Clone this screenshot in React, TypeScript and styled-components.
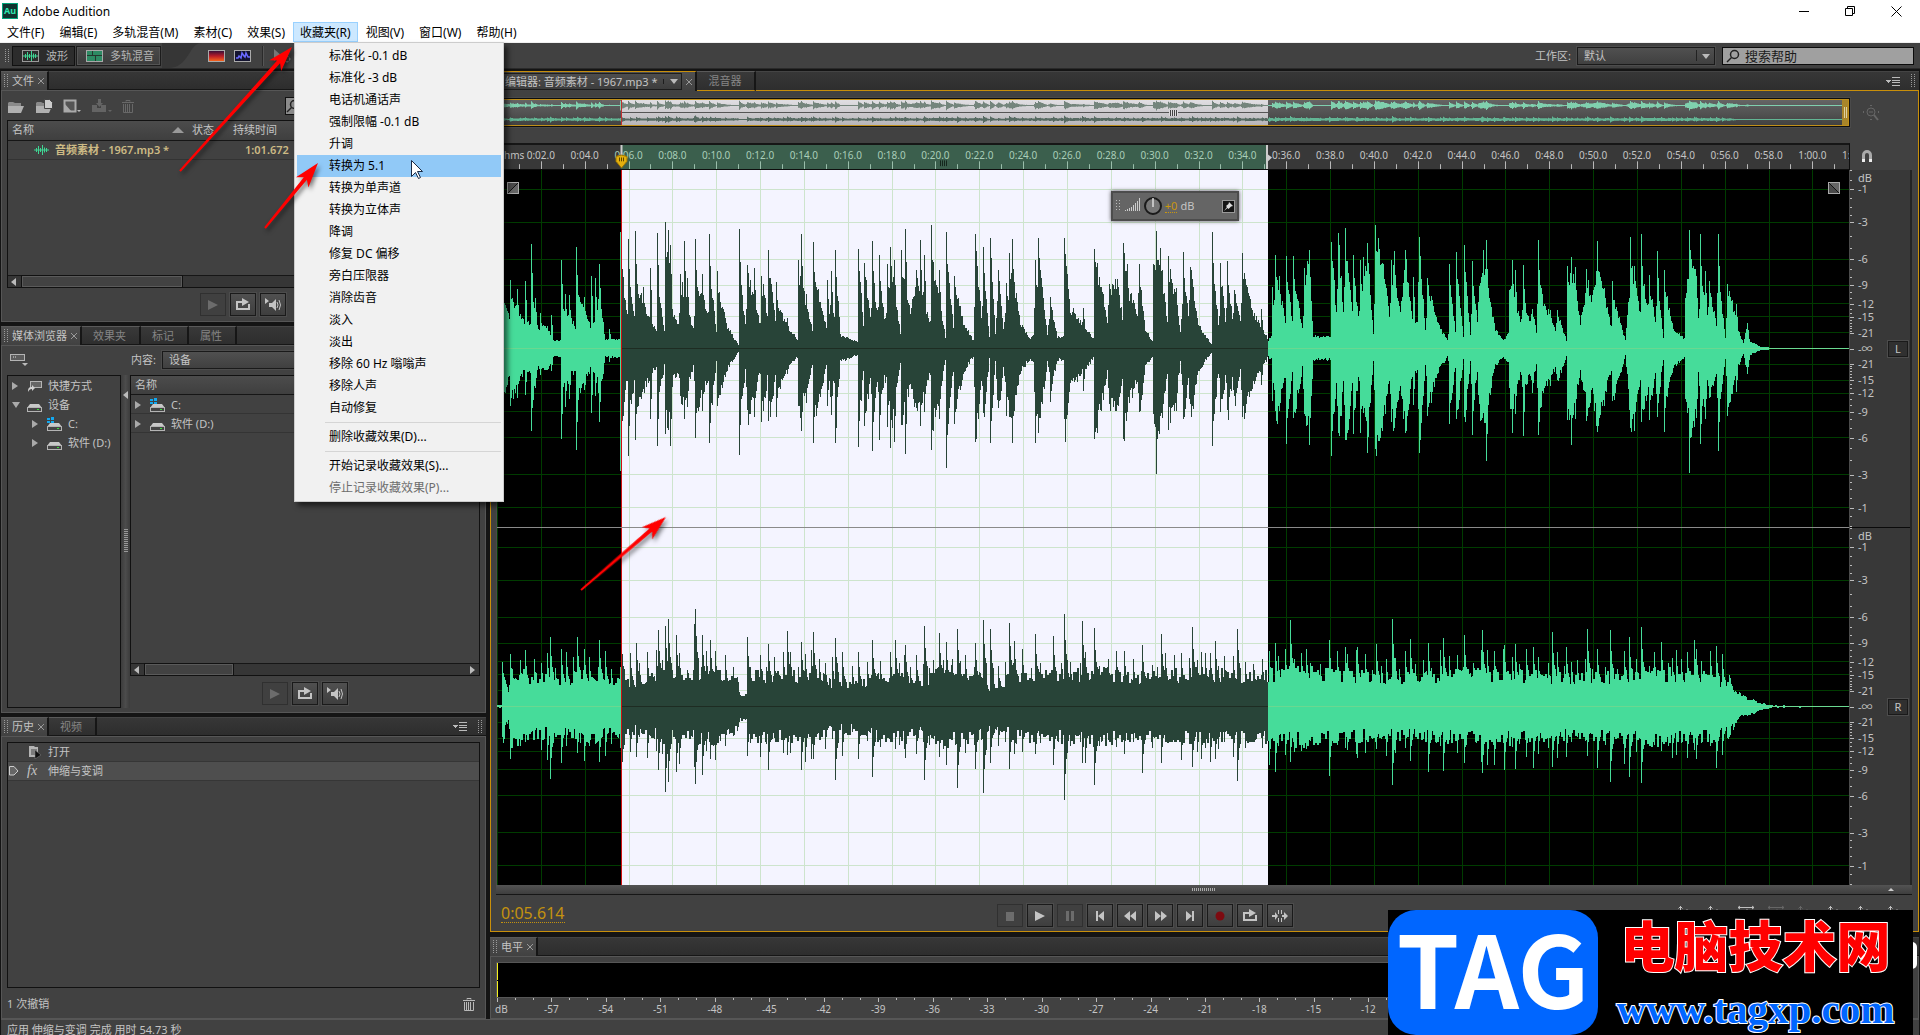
import React from "react";
import styled, { createGlobalStyle, css } from "styled-components";

/* ---------- waveform data ---------- */

type Pt = [number, number];

// Three units per column horizontally, three units per level step vertically.
const decode = (offset: number, zero: number, flat: number[]): Pt[] => {
  const out: Pt[] = [];
  for (let i = 0; i < flat.length; i += 2) {
    out.push([Math.round(offset + flat[i] / 3), (zero - flat[i + 1]) / 3]);
  }
  return out;
};

const leftSpikes: Pt[] = [
  ...decode(-17, 865, [
    91, 660, 112, 685, 135, 662, 154, 550, 166, 712, 180, 758, 214, 765, 244, 598, 256, 700, 268, 705, 289, 560, 313, 710,
    334, 648, 346, 652, 357, 612, 388, 805, 421, 516, 427, 625, 445, 535, 466, 512, 490, 680, 511, 623, 532, 517, 556, 485,
    565, 508, 570, 555, 601, 640, 611, 541, 622, 652, 646, 536, 667, 640, 688, 520, 712, 632, 778, 506, 801, 615, 823, 623,
    844, 646, 865, 569, 889, 664, 922, 772, 955, 600, 964, 520, 979, 700, 1000, 545, 1021, 725, 1042, 658, 1054, 631, 1066,
    568, 1135, 565, 1153, 608, 1177, 541, 1198, 585, 1222, 610, 1231, 560, 1243, 600, 1264, 568, 1276, 505, 1309, 628, 1321,
    538, 1333, 585, 1354, 494, 1378, 628, 1399, 514, 1423, 646,
  ]),
  ...decode(473, 865, [
    16, 520, 40, 560, 61, 534, 85, 634, 107, 667, 118, 577, 127, 535, 196, 600, 205, 532, 241, 709, 283, 534, 308, 742, 338,
    742, 373, 565, 382, 607, 394, 680, 418, 670, 429, 675, 440, 655, 460, 547, 472, 612, 484, 697, 506, 610, 550, 612, 559,
    512, 571, 562, 595, 586, 604, 655, 617, 682, 640, 575, 661, 620, 727, 514, 751, 608, 772, 601, 793, 690, 817, 577, 826,
    655, 838, 708, 872, 747, 905, 684, 916, 585, 928, 648, 949, 587, 970, 588, 1003, 622, 1016, 568, 1084, 544, 1105, 517,
    1126, 502, 1150, 583, 1171, 598, 1180, 591, 1192, 547, 1216, 493, 1225, 532, 1237, 627, 1262, 600, 1271, 571, 1304, 568,
    1328, 651, 1348, 531, 1372, 652, 1383, 706,
  ]),
  ...decode(943, 1045, [
    28, 790, 49, 755, 73, 735, 95, 783, 128, 750, 139, 718, 206, 870, 216, 778, 226, 808, 250, 795, 294, 718, 382, 798, 394,
    770, 404, 800, 437, 805, 470, 722, 481, 830, 493, 862, 516, 843, 571, 709, 583, 798, 604, 701, 626, 825, 650, 753, 671,
    810, 748, 688, 760, 798, 781, 700, 794, 812, 808, 843, 833, 702, 861, 852, 887, 912, 920, 968,
  ]),
];

const leftBase: Pt[] = [
  [0, 40],
  ...decode(-17, 865, [
    75, 740, 90, 790, 93, 710, 130, 785, 150, 790, 156, 700, 175, 805, 200, 800, 220, 840, 243, 840, 245, 740, 285, 800, 290,
    700, 320, 780, 330, 800, 350, 760, 358, 700, 375, 840, 420, 835, 425, 650, 440, 770, 450, 680, 465, 780, 470, 680, 505,
    770, 530, 815, 535, 700, 555, 825, 560, 600, 580, 770, 595, 790, 605, 680, 640, 810, 650, 670, 670, 730, 685, 760, 690,
    640, 708, 820, 715, 700, 740, 800, 775, 855, 780, 660, 795, 790, 805, 650, 840, 790, 848, 680, 862, 770, 869, 660, 885,
    780, 895, 735, 920, 800, 953, 840, 957, 650, 995, 810, 1003, 650, 1040, 820, 1050, 720, 1062, 760, 1068, 640, 1080, 825,
    1130, 845, 1135, 600, 1150, 790, 1155, 660, 1170, 770, 1180, 660, 1190, 760, 1200, 670, 1212, 780, 1225, 740, 1232, 620,
    1262, 840, 1266, 640, 1290, 760, 1310, 650, 1350, 790, 1356, 620, 1370, 680, 1395, 830, 1402, 620, 1420, 800, 1426, 670,
    1450, 790, 1480, 840, 1486, 640,
  ]),
  ...decode(473, 865, [
    16, 560, 32, 770, 42, 660, 58, 830, 64, 620, 75, 820, 85, 650, 100, 810, 110, 720, 125, 640, 150, 790, 180, 835, 190, 820,
    193, 740, 206, 620, 230, 820, 242, 740, 260, 830, 280, 830, 286, 600, 300, 760, 320, 770, 350, 810, 370, 835, 375, 630,
    395, 700, 410, 790, 418, 690, 430, 680, 442, 670, 455, 770, 462, 600, 475, 700, 500, 760, 507, 650, 525, 810, 546, 840,
    552, 620, 560, 600, 575, 650, 590, 790, 600, 650, 615, 700, 630, 820, 641, 650, 655, 770, 663, 630, 680, 780, 700, 820,
    725, 855, 729, 620, 745, 790, 755, 680, 765, 780, 773, 660, 785, 770, 795, 700, 810, 790, 820, 650, 850, 760, 880, 810,
    893, 840, 903, 830, 905, 690, 910, 750, 917, 640, 945, 780, 950, 660, 965, 790, 972, 660, 995, 800, 1005, 660, 1016, 600,
    1030, 830, 1080, 830, 1084, 560, 1098, 760, 1107, 580, 1118, 760, 1127, 570, 1145, 760, 1152, 650, 1165, 770, 1182, 650,
    1195, 620, 1208, 825, 1218, 560, 1240, 630, 1256, 770, 1270, 620, 1290, 760, 1305, 600, 1325, 780, 1340, 790, 1348, 560,
    1365, 810, 1373, 690, 1400, 790, 1432, 840,
  ]),
  ...decode(943, 145, [
    0, 100, 24, 100, 28, -60, 45, 90, 50, -60, 68, 110, 74, -80, 90, 105, 96, -40, 110, 60, 118, -60, 127, -60, 140, -110, 147,
    0, 165, 90, 190, 120, 203, 100, 206, 0, 214, -60, 240, 70, 252, 0, 268, 70, 275, 20, 288, 100, 295, -90, 310, 20, 330, 40,
    345, 90, 350, 40, 378, 120, 382, -60, 400, -60, 420, 70, 428, 20, 440, -50, 455, 0, 471, -90, 500, 30, 512, 80, 517, -20,
    555, 120, 560, 50, 572, -100, 600, 40, 606, -60, 625, 20, 630, -20, 645, 60, 652, -40, 668, 110, 673, -40, 700, 90, 733,
    115, 736, 0, 749, -120, 767, -60, 775, 60, 783, -80, 800, 40, 808, -20, 828, 70, 834, -80, 855, 115, 860, -30, 875, 10,
    890, 80, 910, 130, 918, 80, 930, 125, 960, 139, 985, 142, 1000, 144,
  ]),
  [1351, 0.4],
];

const noise = (n: number) => {
  const s = Math.sin(n * 127.1 + 11.7) * 43758.5453;
  return s - Math.floor(s);
};

const PLOT = 1352;
const SEL_A = 124;
const SEL_B = 771;

const interpolate = (pts: Pt[], x: number) => {
  for (let i = 1; i < pts.length; i++) {
    if (x <= pts[i][0]) {
      const [ax, ay] = pts[i - 1];
      const [bx, by] = pts[i];
      return bx === ax ? by : ay + ((by - ay) * (x - ax)) / (bx - ax);
    }
  }
  return pts[pts.length - 1][1];
};

type Shape = { seed: number; rough: number; gain: number; mirror?: boolean; grain?: number; decay?: number };

const build = (base: Pt[], spikes: Pt[], { seed, rough, gain, mirror, grain = 1, decay = 0 }: Shape) => {
  const out: number[] = [];
  for (let x = 0; x < PLOT; x++) {
    const b = interpolate(base, x);
    out.push(Math.max(0.5, b * gain * (1 - rough / 2 + rough * noise(Math.floor(x / grain) + seed))));
  }
  spikes.forEach(([x, h], i) => {
    if (x < 0 || x >= PLOT) return;
    const peak = h * (mirror ? 0.62 + 0.45 * noise(i + seed) : 1);
    out[x] = Math.max(out[x], peak);
    if (x + 1 < PLOT) out[x + 1] = Math.max(out[x + 1], peak * 0.72);
    for (let j = 2; j < 2 + decay && x + j < PLOT; j++) out[x + j] = Math.max(out[x + j], peak * (0.68 - 0.06 * j));
  });
  return out;
};

const rightBase: Pt[] = [
  [0, 1], [4, 1], [5, 34], [11, 12], [13, 34], [40, 28], [65, 24], [80, 28], [96, 34], [110, 22], [124, 26], [140, 22], [160, 30],
  [190, 30], [215, 34], [240, 24], [243, 12], [249, 11], [253, 32], [285, 28], [310, 32], [340, 22], [360, 24], [385, 30],
  [420, 26], [450, 34], [480, 30], [492, 20], [520, 30], [560, 30], [600, 34], [640, 28], [700, 32], [760, 30], [800, 34],
  [860, 30], [920, 28], [980, 33], [1040, 30], [1100, 28], [1150, 33], [1200, 30], [1218, 30], [1225, 22], [1232, 30],
  [1238, 15], [1250, 8], [1262, 4], [1275, 1], [1351, 0.4],
];

const rightSpikes: Pt[] = (() => {
  const known: Pt[] = [
    [5, 45], [13, 53], [28, 57], [53, 70], [80, 70], [87, 58], [102, 67], [124, 73], [139, 64], [161, 77], [168, 81], [171, 88],
    [179, 72], [197, 83], [198, 98], [205, 72], [213, 67], [250, 70], [271, 63], [290, 76], [304, 65], [316, 75], [338, 69],
    [375, 67], [398, 67], [408, 62], [427, 81], [442, 74], [449, 65], [460, 78], [478, 64], [486, 87], [493, 78], [512, 84],
    [517, 66], [538, 73], [556, 71], [567, 93], [585, 86], [597, 79], [645, 62], [664, 73], [695, 80], [718, 66], [740, 78],
  ];
  for (let x = 15; x < 1232; x += 4 + Math.round(noise(x) * 6)) {
    if (x > 236 && x < 250) continue;
    known.push([x, 36 + 22 * noise(x * 3)]);
  }
  for (let x = 778; x < 1228; x += 11 + Math.round(noise(x + 4) * 12)) {
    known.push([x, 56 + 34 * noise(x * 7) * noise(x * 5)]);
  }
  return known;
})();

const channels = [
  {
    up: build(leftBase, leftSpikes, { seed: 3, rough: 0.24, gain: 1 }),
    down: build(leftBase, leftSpikes, { seed: 41, rough: 0.3, gain: 0.94, mirror: true }),
  },
  {
    up: build(rightBase, rightSpikes, { seed: 90, rough: 0.5, gain: 1, grain: 2, decay: 2 }),
    down: build(rightBase, rightSpikes, { seed: 170, rough: 0.5, gain: 1, mirror: true, grain: 2, decay: 2 }),
  },
];

const wavePath = (up: number[], down: number[], from: number, to: number, mid: number, k: number) => {
  let d = `M${from} ${mid}`;
  for (let x = from; x < to; x++) d += `V${(mid - up[x] * k).toFixed(1)}H${x + 1}`;
  d += `V${mid}`;
  for (let x = to - 1; x >= from; x--) d += `V${(mid + down[x] * k).toFixed(1)}H${x}`;
  return d + "Z";
};

const DB = [1, 3, 6, 9, 12, 15, 21];
const MINOR = [0, 0.5, 1.5, 2, 2.5, 4, 5, 7, 8, 10, 11, 13, 14, 16, 17, 18, 19, 20];
const level = (db: number) => Math.pow(10, -db / 20);
const SECONDS = 61.672;
const timeText = (s: number) => `${Math.floor(s / 60)}:${String(s % 60).padStart(2, "0")}.0`;

/* ---------- styles ---------- */

const Global = createGlobalStyle`
  * { box-sizing: border-box; }
  body { margin: 0; background: #141414; }
  button, input, select { font: inherit; color: inherit; margin: 0; }
`;

const App_ = styled.div`
  position: relative;
  display: flex;
  flex-direction: column;
  height: 100vh;
  overflow: hidden;
  background: #141414;
  color: #c4c4c4;
  font: 11px/16px "Noto Sans", "Noto Sans CJK SC", sans-serif;
`;

const TitleBar = styled.header`
  display: flex;
  align-items: center;
  height: 22px;
  padding: 0 8px 0 2px;
  gap: 5px;
  background: #fff;
  color: #000;
  font-size: 12px;
  line-height: 20px;
`;
const AppBadge = styled.span`
  width: 16px;
  height: 16px;
  border: 1px solid #00a47a;
  background: #12332f;
  color: #2ee6b0;
  font: bold 9px/13px "Noto Sans", sans-serif;
  text-align: center;
`;
const AppName = styled.span`
  padding-top: 2px;
`;
const WindowButtons = styled.div`
  display: flex;
  margin-left: auto;
  gap: 14px;
`;
const WindowButton = styled.button`
  width: 32px;
  height: 20px;
  padding: 0;
  border: 0;
  background: none;
  display: grid;
  place-items: center;
`;

const MenuBar = styled.nav`
  display: flex;
  gap: 1px;
  height: 21px;
  padding-bottom: 1px;
  background: #fff;
  border-bottom: 1px solid #f0f0f0;
  color: #000;
  font-size: 12px;
`;
const MenuTitle = styled.button<{ $open?: boolean }>`
  height: 20px;
  padding: 1px 6px 0;
  border: 1px solid ${(p) => (p.$open ? "#99d1ff" : "transparent")};
  background: ${(p) => (p.$open ? "#cce8ff" : "none")};
  line-height: 17px;
  white-space: nowrap;
`;

const raised = css`
  border: 1px solid #1a1a1a;
  box-shadow: 0 0 0 1px #4c4c4c;
`;

const ToolBar = styled.div`
  display: flex;
  align-items: center;
  height: 26px;
  padding: 0 6px 0 5px;
  background: #414141;
  border-bottom: 1px solid #2a2a2a;
`;
const ToolGrip = styled.span`
  display: grid;
  width: 7px;
`;
const ModeButton = styled.button<{ $active?: boolean }>`
  display: flex;
  align-items: center;
  gap: 7px;
  height: 20px;
  margin-right: 1px;
  padding: 0 6px 0 9px;
  border: 1px solid ${(p) => (p.$active ? "#111" : "#1c1c1c")};
  box-shadow: ${(p) => (p.$active ? "none" : "inset 0 0 0 1px #545454")};
  background: ${(p) => (p.$active ? "#2c2c2c" : "linear-gradient(#4a4a4a, #3c3c3c)")};
  color: #b4b4b4;
`;
const ToolButton = styled.button`
  padding: 0;
  margin-right: 9px;
  border: 0;
  background: none;
  display: grid;
`;
const ToolCurve = styled.svg`
  align-self: stretch;
  margin-right: 3px;
`;
const ToolDivider = styled.span`
  width: 2px;
  height: 20px;
  margin: 0 10px 0 2px;
  background: #2a2a2a;
  border-right: 1px solid #555;
`;
const WorkspaceLabel = styled.label`
  margin-left: auto;
  margin-right: 6px;
`;
const SelectBox = styled.span<{ $wide?: boolean }>`
  position: relative;
  display: flex;
  height: 18px;
  width: ${(p) => (p.$wide ? "auto" : "138px")};
  flex: ${(p) => (p.$wide ? "1" : "none")};
  border: 1px solid #1a1a1a;
  outline: 1px solid #4c4c4c;
  background: linear-gradient(#505050, #404040);
  &::after {
    content: "";
    position: absolute;
    right: 4px;
    top: 6px;
    border: 4px solid transparent;
    border-top: 5px solid #bbb;
    border-bottom: 0;
  }
  &::before {
    content: "";
    position: absolute;
    right: 17px;
    top: 2px;
    bottom: 3px;
    width: 1px;
    background: #222;
  }
`;
const Select = styled.select`
  appearance: none;
  flex: 1;
  padding: 0 20px 0 6px;
  border: 0;
  background: none;
  line-height: 16px;
`;
const SearchBox = styled.label`
  display: flex;
  align-items: center;
  gap: 5px;
  width: 192px;
  height: 18px;
  margin-left: 7px;
  padding-left: 3px;
  border: 1px solid #0c0c0c;
  background: #a0a0a0;
  color: #222;
`;
const SearchInput = styled.input`
  width: 140px;
  padding: 0;
  border: 0;
  background: none;
  font-size: 13px;
  line-height: 16px;
  &::placeholder {
    color: #1c1c1c;
    opacity: 1;
  }
`;

const Workspace = styled.main`
  flex: 1;
  min-height: 0;
  display: grid;
  grid-template-columns: minmax(0, 485fr) minmax(0, 1429fr);
  gap: 4px;
  padding: 2px 1px 0;
`;
const LeftColumn = styled.div`
  display: grid;
  min-height: 0;
  grid-template-rows: minmax(0, 251fr) minmax(0, 387fr) minmax(0, 302fr);
  gap: 4px;
`;
const RightColumn = styled.div`
  display: grid;
  min-height: 0;
  grid-template-rows: minmax(0, 1fr) 82px;
  gap: 5px;
`;
const Panel = styled.section`
  display: flex;
  flex-direction: column;
  min-width: 0;
  min-height: 0;
`;
const PanelBody = styled.div<{ $focus?: boolean }>`
  flex: 1;
  min-height: 0;
  display: flex;
  flex-direction: column;
  padding: ${(p) => (p.$focus ? "7px 5px 0" : "5px 5px 0")};
  border: 1px solid ${(p) => (p.$focus ? "#c98f0a" : "#565656")};
  border-top-width: ${(p) => (p.$focus ? 0 : "1px")};
  background: #414141;
`;
const TabStrip = styled.div<{ $focus?: boolean }>`
  display: flex;
  height: ${(p) => (p.$focus ? "20px" : "19px")};
  background: linear-gradient(#373737, #2d2d2d);
`;
const Tab = styled.button<{ $active?: boolean; $focus?: boolean }>`
  display: flex;
  align-items: center;
  gap: 4px;
  padding: ${(p) => (p.$active ? "0 3px 0 3px" : "0 13px 0 11px")};
  border: 0;
  border-right: 2px solid #161616;
  border-top: 1px solid ${(p) => (p.$focus ? "#c98f0a" : "#5a5a5a")};
  border-bottom: ${(p) => (p.$active ? "0" : p.$focus === undefined ? "1px solid #161616" : "1px solid #c98f0a")};
  background: ${(p) => (p.$active ? "linear-gradient(#505050, #414141)" : "linear-gradient(#393939, #2e2e2e)")};
  color: ${(p) => (p.$active ? "#c4c4c4" : "#858585")};
  white-space: nowrap;
`;
const TabFill = styled.div<{ $focus?: boolean }>`
  flex: 1;
  display: flex;
  justify-content: flex-end;
  align-items: center;
  gap: 11px;
  padding-right: 4px;
  border-top: 1px solid #444;
  border-bottom: 1px solid ${(p) => (p.$focus ? "#c98f0a" : "#161616")};
`;
const EditorTitle = styled.span`
  display: flex;
  align-items: center;
  height: 17px;
  padding: 0 3px;
  gap: 6px;
  border: 1px solid #1d1d1d;
  background: linear-gradient(#4d4d4d, #3d3d3d);
`;
const EditorCaret = styled.i`
  padding-left: 6px;
  border-left: 1px solid #1d1d1d;
  &::after {
    content: "";
    display: block;
    border: 4px solid transparent;
    border-top: 5px solid #bbb;
    border-bottom: 0;
  }
`;

const IconRow = styled.div`
  display: flex;
  align-items: center;
  height: 24px;
  gap: 10px;
  padding: 0 0 4px;
`;
const IconButton = styled.button`
  padding: 0;
  border: 0;
  background: none;
  display: grid;
  place-items: center;
`;
const FilterButton = styled(IconButton)`
  margin-left: 141px;
  width: 24px;
  height: 18px;
  border: 1px solid #111;
  background: #8b8b8b;
  place-items: center start;
`;
const Frame = styled.div`
  flex: 1;
  min-width: 0;
  min-height: 0;
  display: flex;
  flex-direction: column;
  border: 1px solid #111;
`;
const FileTable = styled.table`
  width: 100%;
  border-collapse: collapse;
  table-layout: fixed;
  th {
    height: 19px;
    padding: 0 4px;
    text-align: left;
    font-weight: normal;
    white-space: nowrap;
    background: linear-gradient(#4c4c4c, #3f3f3f);
    border-bottom: 1px solid #161616;
  }
  td {
    height: 19px;
    padding: 0 4px;
    color: #cdbb85;
    font-weight: 600;
    white-space: nowrap;
    border-bottom: 1px solid #333;
  }
`;
const SortHead = styled.span`
  display: flex;
  justify-content: space-between;
  align-items: center;
  &::after {
    content: "";
    border: 6px solid transparent;
    border-bottom-color: #999;
    border-top: 0;
  }
`;
const FileName = styled.span`
  display: flex;
  align-items: center;
  gap: 5px;
  padding-left: 21px;
`;
const DurationCell = styled.td`
  && {
    padding-left: 16px;
  }
`;
const ScrollTrack = styled.div`
  display: flex;
  align-items: center;
  height: 12px;
  margin-top: auto;
  border-top: 1px solid #161616;
  background: #363636;
`;
const ScrollThumb = styled.div<{ $w: string }>`
  width: ${(p) => p.$w};
  height: 11px;
  margin: 0 auto 0 2px;
  border: 1px solid #5a5a5a;
  box-shadow: 0 0 0 1px #111;
  background: #424242;
`;
const Triangle = styled.i<{ $dir: "l" | "r" }>`
  border: 4px solid transparent;
  ${(p) => (p.$dir === "l" ? "border-right: 5px solid #bbb; border-left: 0;" : "border-left: 5px solid #bbb; border-right: 0;")}
`;
const ScrollArrow = styled(Triangle)`
  margin: 0 4px 0 3px;
`;
const Buttons = styled.div<{ $center?: boolean }>`
  display: flex;
  justify-content: center;
  gap: 4px;
  padding: ${(p) => (p.$center ? "6px 0 3px" : "5px 2px 5px 0")};
`;
const SquareButton = styled.button`
  display: grid;
  place-items: center;
  width: 26px;
  height: 23px;
  padding: 0;
  color: #c4c4c4;
  background: linear-gradient(#505050, #3e3e3e);
  ${raised}
  &:disabled {
    color: #6c6c6c;
    background: #404040;
    border-color: #303030;
    box-shadow: none;
  }
`;

const MediaBar = styled.div`
  display: flex;
  align-items: center;
  height: 18px;
  padding-left: 3px;
  margin-bottom: 6px;
`;
const ContentLabel = styled.label`
  margin-left: 103px;
  margin-right: 6px;
`;
const MediaSplit = styled.div`
  flex: 1;
  min-height: 0;
  display: flex;
  margin-bottom: 4px;
`;
const TreeFrame = styled(Frame)`
  flex: 0 0 114px;
`;
const Splitter = styled.div`
  display: flex;
  flex-direction: column;
  align-items: center;
  flex: 0 0 9px;
  padding-top: 16px;
  background: linear-gradient(90deg, #3c3c3c, #4c4c4c, #3c3c3c);
`;
const SplitDots = styled.i`
  width: 4px;
  height: 24px;
  margin-top: 130px;
  background: repeating-linear-gradient(#999 0 1px, transparent 1px 2px);
`;
const MediaRight = styled.div`
  flex: 1;
  min-width: 0;
  display: flex;
  flex-direction: column;
`;
const TreeRow = styled.div<{ $depth?: number; $line?: boolean }>`
  display: flex;
  align-items: center;
  gap: 6px;
  height: 19px;
  padding-top: 2px;
  padding-left: ${(p) => 4 + (p.$depth || 0) * 20}px;
  border-bottom: 1px solid ${(p) => (p.$line ? "#343434" : "transparent")};
  white-space: nowrap;
`;
const Twisty = styled.i<{ $open?: boolean }>`
  width: 9px;
  &::after {
    content: "";
    display: block;
    width: 0;
    border: 4px solid transparent;
    ${(p) => (p.$open ? "border-top: 6px solid #aaa; border-bottom: 0;" : "border-left: 6px solid #aaa; border-right: 0;")}
  }
`;
const ListHead = styled.div`
  height: 19px;
  padding: 0 4px;
  line-height: 18px;
  border-bottom: 1px solid #161616;
  background: linear-gradient(#4c4c4c, #3f3f3f);
`;

const HistoryRow = styled.div<{ $active?: boolean }>`
  display: grid;
  grid-template-columns: 18px 21px 1fr;
  align-items: center;
  height: 19px;
  padding-left: 1px;
  background: ${(p) => (p.$active ? "#4e4e4e" : "none")};
  border-bottom: 1px solid #363636;
`;
const FxMark = styled.i`
  font: italic 14px/16px "Liberation Serif", serif;
`;
const HistoryFoot = styled.footer`
  display: flex;
  justify-content: space-between;
  align-items: center;
  height: 30px;
  padding: 2px 5px 0 0;
`;

/* editor */
const EditorGrid = styled.div`
  flex: 1;
  min-height: 0;
  display: grid;
  grid-template-columns: minmax(0, 1fr) 63px;
  grid-template-rows: 29px 43px minmax(0, 1fr) 12px;
`;
const Overview = styled.div`
  border: 1px solid #0e0e0e;
  outline: 1px solid #4a4a4a;
  svg {
    display: block;
    width: 100%;
    height: 27px;
  }
`;
const SideCell = styled.div<{ $low?: boolean }>`
  display: grid;
  place-items: center;
  padding: ${(p) => (p.$low ? "15px 29px 0 0" : "0 22px 0 0")};
`;
const Ruler = styled.div`
  position: relative;
  margin-top: 16px;
  border: 1px solid #0e0e0e;
  border-top: 2px solid #161616;
  background: #383838;
  overflow: hidden;
  font-size: 10px;
`;
const RulerSelection = styled.div`
  position: absolute;
  left: 9.2%;
  width: 47.8%;
  top: 0;
  bottom: 0;
  background: #3b5f4d;
  border-right: 2px solid #ccc;
`;
const RulerSvg = styled.svg`
  position: absolute;
  inset: 0;
  width: 100%;
  height: 100%;
`;
const TimeLabel = styled.span<{ $sel?: boolean }>`
  position: absolute;
  top: 1px;
  transform: translateX(-50%);
  color: ${(p) => (p.$sel ? "#a9cdb8" : "#c4c4c4")};
  line-height: 18px;
`;
const Unit = styled.span`
  position: absolute;
  top: 1px;
  left: 7px;
  line-height: 18px;
`;
const Waves = styled.div`
  position: relative;
  display: grid;
  min-height: 0;
  grid-template-rows: minmax(0, 1fr) minmax(0, 1fr);
  gap: 1px;
  border: solid #4a4a4a;
  border-width: 0 1px;
  background: #8a8a8a;
  svg {
    display: block;
    width: 100%;
    height: 100%;
    min-height: 0;
  }
`;
const Fade = styled.button<{ $right?: boolean }>`
  position: absolute;
  top: 12px;
  ${(p) => (p.$right ? "right: 9px;" : "left: 10px;")}
  width: 12px;
  height: 12px;
  padding: 0;
  border: 1px solid #aaa;
  background: linear-gradient(
    ${(p) => (p.$right ? "45deg" : "135deg")},
    #4a4a4a 46%,
    #111 46% 54%,
    #666 54%
  );
`;
const Hud = styled.div`
  position: absolute;
  left: 45.4%;
  top: 21px;
  display: flex;
  align-items: center;
  width: 128px;
  height: 30px;
  padding: 0 2px 0 3px;
  border: 2px solid #4c4c4c;
  box-shadow: 0 0 4px #555;
  background: #656565;
`;
const HudIcons = styled.svg`
  && {
    width: 46px;
    height: 24px;
  }
`;
const HudValue = styled.span`
  margin: 0 3px 0 3px;
  color: #c9970f;
  line-height: 13px;
  border-bottom: 1px dotted #c9970f;
`;
const HudPin = styled.button`
  display: grid;
  width: 13px;
  height: 13px;
  margin-left: auto;
  padding: 1px;
  border: 1px solid #999;
  background: #151515;
`;
const Scale = styled.div`
  display: grid;
  grid-template-rows: minmax(0, 1fr) minmax(0, 1fr);
  gap: 1px;
  margin-right: 1px;
  border-right: 2px solid #232323;
  background: #0a0a0a;
  min-height: 0;
`;
const ScaleChannel = styled.div`
  position: relative;
  min-height: 0;
  background: #383838;
`;
const Tick = styled.i<{ $major?: boolean }>`
  position: absolute;
  left: 0;
  width: ${(p) => (p.$major ? 4 : 2)}px;
  height: 1px;
  background: #bbb;
`;
const DbLabel = styled.span`
  position: absolute;
  left: 8px;
  line-height: 14px;
  transform: translateY(-50%);
`;
const ChannelButton = styled.button`
  position: absolute;
  right: 2px;
  top: 50%;
  width: 20px;
  height: 16px;
  margin-top: -8px;
  padding: 0;
  line-height: 13px;
  background: #303030;
  ${raised}
`;
const EditorScroll = styled.div`
  grid-column: 1 / -1;
  display: grid;
  grid-template-columns: 1fr auto 1fr;
  align-items: center;
  height: 10px;
  margin-right: 1px;
  background: linear-gradient(#535353, #3e3e3e);
  border-bottom: 1px solid #161616;
`;
const ScrollDots = styled.i`
  width: 24px;
  height: 3px;
  background: repeating-linear-gradient(90deg, #aaa 0 1px, transparent 1px 2px);
`;
const ScrollUp = styled.i`
  justify-self: end;
  margin-right: 18px;
  border: 3px solid transparent;
  border-bottom-color: #ccc;
  border-top: 0;
`;
const Transport = styled.div`
  display: grid;
  grid-template-columns: 500fr 298px 619fr;
  align-items: center;
  height: 34px;
`;
const TimeCode = styled.output`
  justify-self: start;
  margin-left: 5px;
  color: #c4920f;
  font-size: 16px;
  line-height: 17px;
  border-bottom: 1px dotted #c4920f;
`;
const ZoomTools = styled.div`
  display: flex;
  justify-content: flex-end;
  gap: 12px;
  padding-right: 8px;
`;

/* levels */
const Meter = styled.div`
  display: grid;
  grid-template-rows: 1fr 1fr;
  gap: 1px;
  height: 37px;
  border: 1px solid #565656;
  background: #000;
`;
const MeterLine = styled.i`
  width: 1px;
  background: #f4f01c;
`;
const MeterScale = styled.div`
  display: grid;
  grid-template-columns: repeat(26, minmax(0, 1fr));
  margin-left: 1px;
  font-size: 10px;
`;
const MeterCell = styled.div`
  height: 20px;
  padding-top: 3px;
  background:
    linear-gradient(#bbb, #bbb) 0 0 / 1px 4px no-repeat,
    linear-gradient(#bbb, #bbb) 18px 0 / 1px 2px no-repeat,
    linear-gradient(#bbb, #bbb) 36px 0 / 1px 2px no-repeat;
`;
const MeterLabel = styled.span<{ $first?: boolean }>`
  display: block;
  width: 20px;
  margin-left: ${(p) => (p.$first ? "-2px" : "-10px")};
  text-align: ${(p) => (p.$first ? "left" : "center")};
`;
const StatusBar = styled.footer`
  display: flex;
  height: 16px;
  margin: 0 1px;
  padding-left: 6px;
  overflow: hidden;
  border-top: 1px solid #565656;
  background: #414141;
  line-height: 20px;
`;

/* overlays */
const Dropdown = styled.div`
  position: absolute;
  z-index: 2;
  left: 294px;
  top: 42px;
  width: 210px;
  padding: 2px;
  border: 1px solid #ccc;
  background: #f1f1f1;
  box-shadow: 4px 4px 5px rgba(0, 0, 0, 0.55);
  color: #000;
  font-size: 12px;
`;
const DropItem = styled.button<{ $hover?: boolean }>`
  display: block;
  width: 100%;
  height: 22px;
  padding: 0 0 0 32px;
  border: 0;
  background: ${(p) => (p.$hover ? "#91c9f7" : "none")};
  text-align: left;
  white-space: nowrap;
  &:disabled {
    color: #6d6d6d;
  }
`;
const DropRule = styled.hr`
  height: 1px;
  margin: 3px 0 3px 28px;
  border: 0;
  background: #d5d5d5;
`;
const Annotations = styled.svg`
  position: absolute;
  z-index: 4;
  left: 0;
  top: 0;
  pointer-events: none;
  overflow: visible;
`;
const ArrowShadow = styled.g`
  filter: drop-shadow(2px 3px 2px rgba(0, 0, 0, 0.5));
`;
const Blob = styled.div`
  position: absolute;
  z-index: 3;
  right: 3px;
  bottom: 66px;
  width: 30px;
  height: 27px;
  border-radius: 5px;
  background: #fff;
`;
const Watermark = styled.aside`
  position: absolute;
  z-index: 3;
  right: 7px;
  bottom: 0;
  display: flex;
  width: 525px;
  height: 125px;
  background: #000;
  font-family: "Noto Sans CJK SC", sans-serif;
`;
const TagLogo = styled.div`
  width: 210px;
  height: 125px;
  border-radius: 28px;
  background: #0066ff;
  color: #fff;
  font-size: 100px;
  font-weight: 700;
  line-height: 112px;
  text-align: center;
`;
const SiteText = styled.div`
  flex: 1;
  display: flex;
  flex-direction: column;
  align-items: center;
`;
const SiteName = styled.strong`
  margin-top: 6px;
  color: #f00;
  font-size: 54px;
  font-weight: 900;
  line-height: 56px;
  -webkit-text-stroke: 2px #fff;
  paint-order: stroke fill;
`;
const SiteUrl = styled.span`
  margin-top: 17px;
  color: #0066ff;
  font: bold 41px/40px "Liberation Serif", serif;
  -webkit-text-stroke: 2px #fff;
  paint-order: stroke fill;
`;

/* ---------- icons ---------- */

const Grip = () => (
  <svg width="4" height="14" shapeRendering="crispEdges" fill="#9a9a9a">
    {[0, 2, 4, 6, 8, 10, 12].map((y) => (
      <path key={y} d={`M0 ${y}h1v1h-1zM3 ${y}h1v1h-1z`} />
    ))}
  </svg>
);
const Close = () => (
  <svg width="6" height="6" stroke="#9a9a9a">
    <path d="M0 0L6 6M6 0L0 6" />
  </svg>
);
const WaveGlyph = ({ frame }: { frame?: boolean }) => (
  <svg width="17" height="12" fill="none" stroke="#3fd694">
    {frame && <rect x=".5" y=".5" width="16" height="11" stroke="#9a9a9a" />}
    <path d="M1 6h15M3.500 4v4M5.500 2v8M7.500 4v4M9.500 1v10M11.500 3.500v5M13.500 4v4" />
  </svg>
);
const MultiGlyph = () => (
  <svg width="17" height="12" shapeRendering="crispEdges">
    <rect width="17" height="12" fill="#a8a8a8" />
    <rect x="1" y="1" width="15" height="10" fill="#26352e" />
    <path d="M1 1h5v4H1zM7 1h9v4H7zM1 6h8v5H1zM10 6h6v5h-6z" fill="#2d8a63" />
  </svg>
);
const SpectralGlyph = () => (
  <svg width="17" height="12">
    <defs>
      <linearGradient id="heat" x2="0" y2="1"><stop stopColor="#3a1038" /><stop offset=".5" stopColor="#b81c28" /><stop offset="1" stopColor="#f4641c" /></linearGradient>
    </defs>
    <rect width="17" height="12" fill="#aaa" />
    <rect x="1" y="1" width="15" height="10" fill="url(#heat)" />
  </svg>
);
const PitchGlyph = () => (
  <svg width="17" height="12">
    <rect x=".5" y=".5" width="16" height="11" fill="#141430" stroke="#aaa" />
    <path d="M2 8h2l1-2 2 2 1-5 2 3 1 1 1-4 2 4h2" fill="none" stroke="#6a6aff" strokeWidth="1.500" />
  </svg>
);
const FolderIcon = ({ page }: { page?: boolean }) => (
  <svg width="18" height="15">
    <path d="M1 13V4l1-1h4l2 1h6v3" fill="#8a8a8a" />
    <path d="M1 13V7h14l2 0-3 7H1z" fill="#b0b0b0" />
    {page && <path d="M9.500.5h5l3 3v6h-8z" fill="#ccc" stroke="#444" />}
  </svg>
);
const NewIcon = () => (
  <svg width="19" height="14">
    <path d="M1.500 1.500h11v11h-11z" fill="#555" stroke="#aaa" strokeWidth="2" />
    <path d="M1 4l8 9H1z" fill="#aaa" />
    <path d="M14 11h4l-2 2z" fill="#bbb" />
  </svg>
);
const InsertIcon = () => (
  <svg width="20" height="14" fill="#646464">
    <path d="M0 6h5v3h4V6h5v7H0zM6 0h3v4h2L7.500 8 4 4h2z" />
    <path d="M16 11h4l-2 2z" />
  </svg>
);
const TrashIcon = ({ dim }: { dim?: boolean }) => (
  <svg width="12" height="13" fill="none" stroke={dim ? "#686868" : "#b8b8b8"}>
    <path d="M4 1.500V.5h4v1M0 2.500h12M1.500 4v8.500h9V4M3.500 4v8M5.500 4v8M7.500 4v8" />
  </svg>
);
const SearchIcon = () => (
  <svg width="14" height="14" fill="none" stroke="#222" strokeWidth="1.500">
    <circle cx="8.500" cy="5.500" r="4" />
    <path d="M5.500 8.500L1 13" />
  </svg>
);
const DriveIcon = ({ win }: { win?: boolean }) => (
  <svg width="15" height="14">
    {win && <path d="M0 1h3v2H0zM4 0h3v3H4zM0 4h3v2H0zM4 4h3v2H4z" fill="#12a8f0" />}
    <path d="M3 6h9l3 4H0z" fill="#c8c8c8" />
    <rect x=".5" y="9.500" width="14" height="4" fill="#444" stroke="#b4b4b4" />
    <rect x="10" y="11" width="2" height="1" fill="#3be03b" />
  </svg>
);
const ShortcutIcon = () => (
  <svg width="15" height="13">
    <rect x="3.500" y="1.500" width="11" height="6" fill="#666" stroke="#b4b4b4" />
    <path d="M1 12c0-4 1-5 4-5V5l3 3-3 3V9C3 9 2 10 1 12z" fill="#d0d0d0" />
  </svg>
);
const DriveMenuIcon = () => (
  <svg width="18" height="14">
    <rect x=".5" y="1.500" width="14" height="6" fill="#5c5c5c" stroke="#b4b4b4" />
    <path d="M3 4h1M5 4h1" stroke="#ddd" />
    <path d="M12 10h6l-3 3z" fill="#bbb" />
  </svg>
);
const Play = () => <path d="M3 2L13 7 3 12z" />;
const Loop = () => (
  <>
    <path d="M8 4H2v7h12V6" fill="none" stroke="currentColor" strokeWidth="2" />
    <path d="M7 0l7 4-7 4z" />
  </>
);
const Speaker = () => (
  <>
    <path d="M0 0l4 3-4 3zM4 5h3l4-4v12L7 9H4z" />
    <path d="M12 4q2 3 0 6M14 2q3 5 0 10" fill="none" stroke="currentColor" />
  </>
);
const Glyph = ({ children }: { children: React.ReactNode }) => (
  <svg width="16" height="14" fill="currentColor">
    {children}
  </svg>
);
const PanelMenu = () => (
  <svg width="14" height="9" stroke="#bbb" shapeRendering="crispEdges">
    <path d="M6 .5h8M6 3.500h8M6 5.500h8M6 8.500h8" />
    <path d="M0 3h5L2.500 6z" fill="#bbb" stroke="none" />
  </svg>
);
const ZoomGlyph = ({ wide, dim }: { wide?: boolean; dim?: boolean }) => (
  <svg width="18" height="18" fill="none" stroke={dim ? "#666" : "#c0c0c0"}>
    {wide ? <path d="M1 2.500h16M3 1L1 2.500 3 4M15 1l2 1.500L15 4" /> : <path d="M3.500 1v6M1.500 3.500l2-2 2 2" />}
    <circle cx="10" cy="9" r="4" />
    <path d="M13 12l4 4" strokeWidth="2" />
  </svg>
);

const PlayerButtons = ({ center }: { center?: boolean }) => (
  <Buttons $center={center}>
    <SquareButton disabled aria-label="播放"><Glyph><Play /></Glyph></SquareButton>
    <SquareButton aria-label="循环播放"><Glyph><Loop /></Glyph></SquareButton>
    <SquareButton aria-label="自动播放"><Glyph><Speaker /></Glyph></SquareButton>
  </Buttons>
);

/* ---------- panels ---------- */

const FilesPanel = () => (
  <Panel>
    <TabStrip>
      <Tab $active><Grip />文件<Close /></Tab>
      <TabFill />
    </TabStrip>
    <PanelBody>
      <IconRow>
        <IconButton aria-label="打开文件"><FolderIcon /></IconButton>
        <IconButton aria-label="导入文件"><FolderIcon page /></IconButton>
        <IconButton aria-label="新建文件"><NewIcon /></IconButton>
        <IconButton aria-label="插入到多轨"><InsertIcon /></IconButton>
        <IconButton aria-label="关闭所选文件"><TrashIcon dim /></IconButton>
        <FilterButton aria-label="筛选"><SearchIcon /></FilterButton>
      </IconRow>
      <Frame>
        <FileTable>
          <colgroup><col width="180" /><col width="41" /><col /></colgroup>
          <thead>
            <tr><th><SortHead>名称</SortHead></th><th>状态</th><th>持续时间</th></tr>
          </thead>
          <tbody>
            <tr>
              <td><FileName><WaveGlyph />音频素材 - 1967.mp3 *</FileName></td>
              <td />
              <DurationCell>1:01.672</DurationCell>
            </tr>
          </tbody>
        </FileTable>
        <ScrollTrack>
          <ScrollArrow $dir="l" />
          <ScrollThumb $w="160px" />
          <ScrollArrow $dir="r" />
        </ScrollTrack>
      </Frame>
      <PlayerButtons />
    </PanelBody>
  </Panel>
);

const MediaPanel = () => (
  <Panel>
    <TabStrip>
      <Tab $active><Grip />媒体浏览器<Close /></Tab>
      <Tab>效果夹</Tab>
      <Tab>标记</Tab>
      <Tab>属性</Tab>
      <TabFill />
    </TabStrip>
    <PanelBody>
      <MediaBar>
        <IconButton aria-label="驱动器"><DriveMenuIcon /></IconButton>
        <ContentLabel htmlFor="content">内容:</ContentLabel>
        <SelectBox $wide><Select id="content"><option>设备</option></Select></SelectBox>
      </MediaBar>
      <MediaSplit>
        <TreeFrame>
          <TreeRow><Twisty /><ShortcutIcon />快捷方式</TreeRow>
          <TreeRow><Twisty $open /><DriveIcon />设备</TreeRow>
          <TreeRow $depth={1}><Twisty /><DriveIcon win />C:</TreeRow>
          <TreeRow $depth={1}><Twisty /><DriveIcon />软件 (D:)</TreeRow>
        </TreeFrame>
        <Splitter><Triangle $dir="l" /><SplitDots /></Splitter>
        <MediaRight>
          <Frame>
            <ListHead>名称</ListHead>
            <TreeRow $line><Twisty /><DriveIcon win />C:</TreeRow>
            <TreeRow $line><Twisty /><DriveIcon />软件 (D:)</TreeRow>
            <ScrollTrack>
              <ScrollArrow $dir="l" />
              <ScrollThumb $w="88px" />
              <ScrollArrow $dir="r" />
            </ScrollTrack>
          </Frame>
          <PlayerButtons center />
        </MediaRight>
      </MediaSplit>
    </PanelBody>
  </Panel>
);

const HistoryPanel = () => (
  <Panel>
    <TabStrip>
      <Tab $active><Grip />历史<Close /></Tab>
      <Tab>视频</Tab>
      <TabFill><PanelMenu /><Grip /></TabFill>
    </TabStrip>
    <PanelBody>
      <Frame>
        <HistoryRow>
          <span />
          <svg width="15" height="14">
            <path d="M2 1h5l1 1h3v10H2z" fill="#b4b4b4" />
            <path d="M4 5h6M4 7h6M4 9h6" stroke="#444" />
            <path d="M8 5v9l6-4z" fill="#111" stroke="#888" strokeWidth=".5" />
          </svg>
          打开
        </HistoryRow>
        <HistoryRow $active>
          <svg width="10" height="10"><path d="M.5.5H5l4 4.500-4 4H.5z" fill="#666" stroke="#ccc" /></svg>
          <FxMark>fx</FxMark>
          伸缩与变调
        </HistoryRow>
      </Frame>
      <HistoryFoot>
        1 次撤销
        <IconButton aria-label="删除"><TrashIcon /></IconButton>
      </HistoryFoot>
    </PanelBody>
  </Panel>
);

const ChannelPlot = ({ index }: { index: number }) => {
  const { up, down } = channels[index];
  const mid = 178.5;
  const lines = [mid, ...DB.flatMap((d) => [mid - 178.5 * level(d), mid + 178.5 * level(d)])];
  const rows = lines.map((y) => `M0 ${Math.floor(y) + 0.5}H${PLOT}`).join("");
  const cols = Array.from({ length: 31 }, (_, i) => `M${Math.round((i * 2 * PLOT) / SECONDS) + 0.5} 0V357`).join("");
  const id = `sel${index}`;
  return (
    <svg viewBox="0 0 1352 357" preserveAspectRatio="none" shapeRendering="crispEdges">
      <clipPath id={id}><rect x={SEL_A} width={SEL_B - SEL_A} height="357" /></clipPath>
      <rect width="1352" height="357" fill="#000" />
      <path d={rows + cols} stroke="#003c00" />
      <rect x={SEL_A} width={SEL_B - SEL_A} height="357" fill="#f4f4ff" />
      <path d={rows + cols} stroke="#cde4cd" clipPath={`url(#${id})`} />
      <path d={wavePath(up, down, 0, SEL_A, mid, 1)} fill="#46dc9a" />
      <path d={wavePath(up, down, SEL_A, SEL_B, mid, 1)} fill="#284438" />
      <path d={wavePath(up, down, SEL_B, PLOT, mid, 1)} fill="#46dc9a" />
      <path d={`M0 ${mid}H${SEL_A}M${SEL_B} ${mid}H${PLOT}`} stroke="#6ad890" />
      <path d={`M${SEL_A} ${mid}H${SEL_B}`} stroke="#1e2c22" />
      <path d={`M${SEL_A + 0.5} 0V357`} stroke="#d01010" />
    </svg>
  );
};

const ScaleSide = ({ name }: { name: string }) => (
  <ScaleChannel>
    {MINOR.flatMap((d) => [50 - 50 * level(d), 50 + 49.7 * level(d)]).map((y, i) => (
      <Tick key={i} style={{ top: `${y}%` }} />
    ))}
    {DB.flatMap((d) => [
      { d, y: 50 - 50 * level(d) },
      { d, y: 50 + 50 * level(d) },
    ]).map(({ d, y }) => (
      <React.Fragment key={`${d}${y}`}>
        <Tick $major style={{ top: `${y}%` }} />
        <DbLabel style={{ top: `${y}%` }}>-{d}</DbLabel>
      </React.Fragment>
    ))}
    <Tick $major style={{ top: "50%" }} />
    <DbLabel style={{ top: "50%" }}>-∞</DbLabel>
    <DbLabel style={{ top: "2.300%" }}>dB</DbLabel>
    <ChannelButton>{name}</ChannelButton>
  </ScaleChannel>
);

const OverviewPlot = () => (
  <svg viewBox="0 0 1352 27" preserveAspectRatio="none">
    <defs>
      <linearGradient id="ovDark" x2="0" y2="1"><stop stopColor="#666" /><stop offset="1" stopColor="#404040" /></linearGradient>
      <linearGradient id="ovLight" x2="0" y2="1"><stop stopColor="#e2e0e4" /><stop offset="1" stopColor="#b6b4b8" /></linearGradient>
    </defs>
    <rect width="1352" height="27" fill="url(#ovDark)" />
    <rect x={SEL_A} width={SEL_B - SEL_A} height="27" fill="url(#ovLight)" />
    {channels.map(({ up, down }, i) => {
      const mid = i ? 20.5 : 6.5;
      const tone = i ? "#62b594" : "#80d0ae";
      const dark = i ? "#566a62" : "#74857c";
      return (
        <g key={i}>
          <path d={wavePath(up, down, 0, SEL_A, mid, 0.04)} fill={tone} />
          <path d={wavePath(up, down, SEL_A, SEL_B, mid, 0.04)} fill={dark} />
          <path d={wavePath(up, down, SEL_B, PLOT, mid, 0.04)} fill={tone} />
          <path d={`M0 ${mid}H${SEL_A}M${SEL_B} ${mid}H${PLOT}`} stroke={tone} />
          <path d={`M${SEL_A} ${mid}H${SEL_B}`} stroke={dark} />
        </g>
      );
    })}
    <path d={`M${SEL_A} 13.500H${SEL_B}`} stroke="#555" />
    <path d="M672 11h9v6h-9z" fill="#dcdadc" />
    <path d="M673.500 11v6M675.500 11v6M677.500 11v6M679.500 11v6" stroke="#444" />
    <path d={`M${SEL_A + 0.5} 0V27`} stroke="#c03030" />
    <rect x="1345" width="7" height="27" fill="#a8852a" />
    <path d="M1347.500 8v11M1349.500 8v11" stroke="#ddd0a0" />
    <path d="M0 .5H1351.500V26.500H.5V0" fill="none" stroke="#c0901a" />
  </svg>
);

const TimeRuler = () => (
  <Ruler>
    <RulerSelection />
    <RulerSvg viewBox="0 0 1352 25" preserveAspectRatio="none" shapeRendering="crispEdges">
      {Array.from({ length: 61 }, (_, i) => {
        const x = Math.round(((i + 1) * PLOT) / SECONDS) + 0.5;
        return <path key={i} d={`M${x} ${i % 2 ? 17 : 20}V25`} stroke={x > SEL_A && x < SEL_B ? "#9cc0ac" : "#bbb"} />;
      })}
    </RulerSvg>
    <Unit>hms</Unit>
    {Array.from({ length: 31 }, (_, i) => {
      const s = (i + 1) * 2;
      return (
        <TimeLabel key={s} $sel={s > 5 && s < 35} style={{ left: `${(s / SECONDS) * 100}%` }}>
          {timeText(s)}
        </TimeLabel>
      );
    })}
    <RulerSvg viewBox="0 0 1352 25" preserveAspectRatio="none">
      <path d="M443.500 16v6M445.500 16v6M447.500 16v6M449.500 16v6" stroke="#14261c" />
      <path d="M124.500 0v14" stroke="#ccc" strokeWidth="2" />
      <path d="M119 12q5-3 11 0v5l-5.500 7-5.500-7z" fill="#e3b00e" stroke="#9c7400" />
      <path d="M122.500 13v4M124.500 13v4M126.500 13v4" stroke="#5c4400" />
      <path d="M770 9l5 4-5 5z" fill="#ccc" />
    </RulerSvg>
  </Ruler>
);

const EditorPanel = () => (
  <Panel>
    <TabStrip $focus>
      <Tab $active $focus>
        <Grip />
        <EditorTitle>编辑器: 音频素材 - 1967.mp3 *<EditorCaret /></EditorTitle>
        <Close />
      </Tab>
      <Tab $focus={false}>混音器</Tab>
      <TabFill $focus><PanelMenu /><Grip /></TabFill>
    </TabStrip>
    <PanelBody $focus>
      <EditorGrid>
        <Overview><OverviewPlot /></Overview>
        <SideCell>
          <svg width="18" height="18" fill="none" stroke="#666">
            <circle cx="9" cy="8" r="4" /><path d="M7 8h4" /><path d="M12 11l4 5" strokeWidth="2" />
            <path d="M9 1v1M9 15v1M1 8h1M16 8h1" strokeWidth="2" />
          </svg>
        </SideCell>
        <TimeRuler />
        <SideCell $low>
          <svg width="12" height="12" fill="none" strokeWidth="3">
            <path d="M2.500 9V5a3.500 3.500 0 0 1 7 0v4" stroke="#aaa" />
            <path d="M2.500 9v3M9.500 9v3" stroke="#eee" />
          </svg>
        </SideCell>
        <Waves>
          <ChannelPlot index={0} />
          <ChannelPlot index={1} />
          <Fade aria-label="淡入" />
          <Fade $right aria-label="淡出" />
          <Hud>
            <HudIcons>
              <path d="M0 6h1v1H0zM0 9h1v1H0zM0 12h1v1H0zM0 15h1v1H0zM3 6h1v1H3zM3 9h1v1H3zM3 12h1v1H3zM3 15h1v1H3z" fill="#bbb" />
              <path d="M9.500 16v1M11.500 15v2M13.500 14v3M15.500 13v4M17.500 11v6M19.500 9v8M21.500 7v10M23.500 4v13" stroke="#ccc" />
              <circle cx="37" cy="12" r="8" fill="#777" stroke="#1a1a1a" strokeWidth="2" />
              <path d="M37 4v9" stroke="#ddd" strokeWidth="1.500" />
            </HudIcons>
            <HudValue>+0</HudValue>dB
            <HudPin aria-label="固定">
              <svg viewBox="0 0 9 9"><path d="M5 0l4 4-2 .5L4.500 7 3.500 6 0 9l3-4-1-1L4.500 2z" fill="#ddd" /></svg>
            </HudPin>
          </Hud>
        </Waves>
        <Scale>
          <ScaleSide name="L" />
          <ScaleSide name="R" />
        </Scale>
        <EditorScroll><span /><ScrollDots /><ScrollUp /></EditorScroll>
      </EditorGrid>
      <Transport>
        <TimeCode>0:05.614</TimeCode>
        <Buttons $center>
          <SquareButton disabled aria-label="停止"><Glyph><path d="M4 3h8v9H4z" /></Glyph></SquareButton>
          <SquareButton aria-label="播放"><Glyph><Play /></Glyph></SquareButton>
          <SquareButton disabled aria-label="暂停"><Glyph><path d="M4 2h3v10H4zM9 2h3v10H9z" /></Glyph></SquareButton>
          <SquareButton aria-label="移到开头"><Glyph><path d="M4 2h2v10H4zM12 2v10L6 7z" /></Glyph></SquareButton>
          <SquareButton aria-label="快退"><Glyph><path d="M8 2v10L2 7zM14 2v10L8 7z" /></Glyph></SquareButton>
          <SquareButton aria-label="快进"><Glyph><path d="M3 2v10l6-5zM9 2v10l6-5z" /></Glyph></SquareButton>
          <SquareButton aria-label="移到结尾"><Glyph><path d="M4 2v10l6-5zM10 2h2v10h-2z" /></Glyph></SquareButton>
          <SquareButton aria-label="录制"><Glyph><circle cx="8" cy="7" r="4.500" fill="#7d0a10" /></Glyph></SquareButton>
          <SquareButton aria-label="循环播放"><Glyph><Loop /></Glyph></SquareButton>
          <SquareButton aria-label="跳过所选项目">
            <Glyph>
              <path d="M0 6h3V3l3 4-3 4V8H0zM10 6h2V3l4 4-4 4V8h-2z" />
              <path d="M6 1h1v4H6zM6 9h1v4H6zM9 1h1v4H9zM9 9h1v4H9z" />
            </Glyph>
          </SquareButton>
        </Buttons>
        <ZoomTools>
          <IconButton aria-label="放大振幅"><ZoomGlyph /></IconButton>
          <IconButton aria-label="缩小振幅"><ZoomGlyph /></IconButton>
          <IconButton aria-label="放大时间"><ZoomGlyph wide /></IconButton>
          <IconButton aria-label="缩小时间"><ZoomGlyph wide dim /></IconButton>
          <IconButton aria-label="全部缩小"><ZoomGlyph dim /></IconButton>
          <IconButton aria-label="放大入点"><ZoomGlyph /></IconButton>
          <IconButton aria-label="放大出点"><ZoomGlyph /></IconButton>
          <IconButton aria-label="缩放至选区"><ZoomGlyph /></IconButton>
        </ZoomTools>
      </Transport>
    </PanelBody>
  </Panel>
);

const LevelsPanel = () => (
  <Panel>
    <TabStrip>
      <Tab $active><Grip />电平<Close /></Tab>
      <TabFill />
    </TabStrip>
    <PanelBody>
      <Meter><MeterLine /><MeterLine /></Meter>
      <MeterScale>
        {Array.from({ length: 26 }, (_, i) => (
          <MeterCell key={i}>
            {i < 17 && <MeterLabel $first={i === 0}>{i === 0 ? "dB" : i * 3 - 60}</MeterLabel>}
          </MeterCell>
        ))}
      </MeterScale>
    </PanelBody>
  </Panel>
);

const MENUS = ["文件(F)", "编辑(E)", "多轨混音(M)", "素材(C)", "效果(S)", "收藏夹(R)", "视图(V)", "窗口(W)", "帮助(H)"];
const FAVORITES = [
  "标准化 -0.1 dB", "标准化 -3 dB", "电话机通话声", "强制限幅 -0.1 dB", "升调", "转换为 5.1", "转换为单声道", "转换为立体声",
  "降调", "修复 DC 偏移", "旁白压限器", "消除齿音", "淡入", "淡出", "移除 60 Hz 嗡嗡声", "移除人声", "自动修复",
];

const Arrow = ({ x1, y1, x2, y2 }: { x1: number; y1: number; x2: number; y2: number }) => {
  const len = Math.hypot(x2 - x1, y2 - y1);
  const deg = (Math.atan2(y2 - y1, x2 - x1) * 180) / Math.PI;
  return (
    <g transform={`translate(${x1} ${y1}) rotate(${deg})`}>
      <path d={`M0 -1L${len - 20} -2L${len - 25} -8L${len} 0L${len - 25} 8L${len - 20} 2L0 1z`} fill="#f00" />
    </g>
  );
};

export default function App() {
  return (
    <App_>
      <Global />
      <TitleBar>
        <AppBadge>Au</AppBadge>
        <AppName>Adobe Audition</AppName>
        <WindowButtons>
          <WindowButton aria-label="最小化"><svg width="11" height="11" stroke="#000"><path d="M0 5.500h10" /></svg></WindowButton>
          <WindowButton aria-label="还原">
            <svg width="11" height="11" fill="none" stroke="#000"><path d="M.5 2.500h7v7h-7zM2.500 2.500v-2h7v7h-2" /></svg>
          </WindowButton>
          <WindowButton aria-label="关闭"><svg width="11" height="11" stroke="#000"><path d="M.5.5l10 10M10.500.5l-10 10" /></svg></WindowButton>
        </WindowButtons>
      </TitleBar>
      <MenuBar>
        {MENUS.map((m) => (
          <MenuTitle key={m} $open={m === "收藏夹(R)"}>{m}</MenuTitle>
        ))}
      </MenuBar>
      <ToolBar>
        <ToolGrip><Grip /></ToolGrip>
        <ModeButton $active><WaveGlyph frame />波形</ModeButton>
        <ModeButton><MultiGlyph />多轨混音</ModeButton>
        <ToolCurve width="43" height="25">
          <path d="M0 0H40C26 0 28 25 6 25H0z" fill="#363636" />
        </ToolCurve>
        <ToolButton aria-label="频谱频率显示"><SpectralGlyph /></ToolButton>
        <ToolButton aria-label="频谱音调显示"><PitchGlyph /></ToolButton>
        <ToolDivider />
        <ToolButton aria-label="移动工具">
          <svg width="18" height="18" fill="#777"><path d="M0 2l9 8H4L0 14zM13 8l2 2h-4zM13 16l-2-2h4zM17 12l-2 2v-4z" /></svg>
        </ToolButton>
        <WorkspaceLabel htmlFor="workspace">工作区:</WorkspaceLabel>
        <SelectBox><Select id="workspace"><option>默认</option></Select></SelectBox>
        <SearchBox><SearchIcon /><SearchInput aria-label="搜索帮助" placeholder="搜索帮助" /></SearchBox>
      </ToolBar>
      <Workspace>
        <LeftColumn>
          <FilesPanel />
          <MediaPanel />
          <HistoryPanel />
        </LeftColumn>
        <RightColumn>
          <EditorPanel />
          <LevelsPanel />
        </RightColumn>
      </Workspace>
      <StatusBar>应用 伸缩与变调 完成 用时 54.73 秒</StatusBar>

      <Dropdown>
        {FAVORITES.map((f) => (
          <DropItem key={f} $hover={f === "转换为 5.1"}>{f}</DropItem>
        ))}
        <DropRule />
        <DropItem>删除收藏效果(D)...</DropItem>
        <DropRule />
        <DropItem>开始记录收藏效果(S)...</DropItem>
        <DropItem disabled>停止记录收藏效果(P)...</DropItem>
      </Dropdown>

      <Blob />
      <Watermark>
        <TagLogo>TAG</TagLogo>
        <SiteText>
          <SiteName>电脑技术网</SiteName>
          <SiteUrl>www.tagxp.com</SiteUrl>
        </SiteText>
      </Watermark>

      <Annotations width="1" height="1">
        <ArrowShadow>
          <Arrow x1={180} y1={171} x2={292} y2={47} />
          <Arrow x1={265} y1={228} x2={318} y2={163} />
          <Arrow x1={581} y1={590} x2={666} y2={517} />
        </ArrowShadow>
        <path d="M411.500 160.500v16l4-4 3 6 2-1-3-6h5z" fill="#fff" stroke="#1a2a44" />
      </Annotations>
    </App_>
  );
}
